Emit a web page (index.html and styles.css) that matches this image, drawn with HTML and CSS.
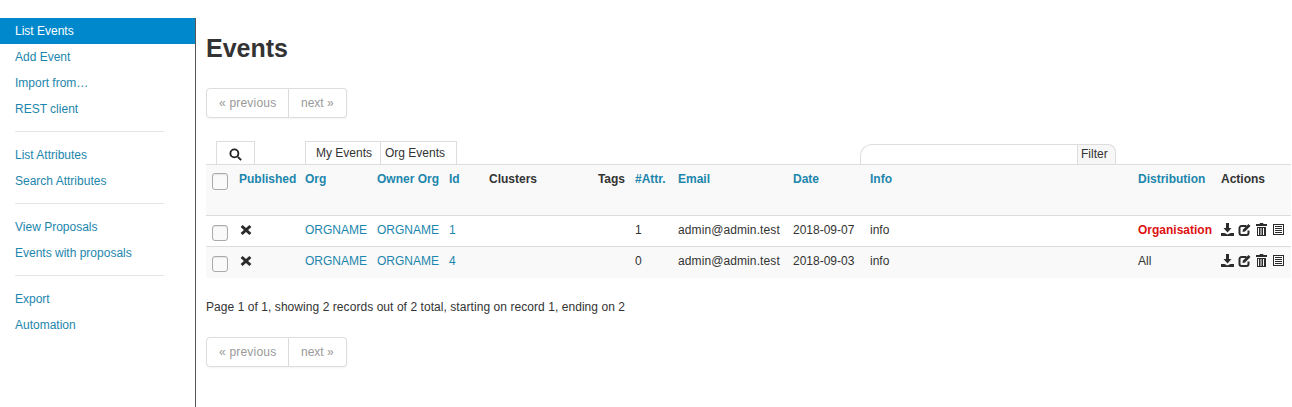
FILE: index.html
```html
<!DOCTYPE html>
<html lang="en">
<head>
<meta charset="utf-8">
<title>Events</title>
<link rel="stylesheet" href="styles.css">
</head>
<body>
<svg class="defs" width="0" height="0" aria-hidden="true">
  <symbol id="i-x" viewBox="0 0 12 12"><path d="M2.600.9 6 4.100 9.400.9l2 2L8.100 6l3.300 3.100-2 2L6 7.900l-3.400 3.200-2-2L3.900 6 .6 2.900z"/></symbol>
  <symbol id="i-dl" viewBox="0 0 13 13"><path d="M5 0h3v5h2.500L6.500 9.500 2.500 5H5zM0 10h3.500l3 1.500 3-1.500H13v3H0z"/></symbol>
  <symbol id="i-edit" viewBox="0 0 13 13"><path d="M8.500 3H3.500A2 2 0 0 0 1.500 5v5a2 2 0 0 0 2 2h5a2 2 0 0 0 2-2V7.500" fill="none" stroke="currentColor" stroke-width="2"/><path d="M4.500 9 5 6.500 10.500 1l2 2L7 8.500z"/></symbol>
  <symbol id="i-trash" viewBox="0 0 13 13"><path d="M5 0h3l.5 1H12v2H1V1h3.500zM2 4h9v9H2zM3 5v7h1V5zm2.500 0v7h1V5zM8 5v7h1V5z" fill-rule="evenodd"/></symbol>
  <symbol id="i-list" viewBox="0 0 13 13"><path d="M1 1h11v11H1zM2 2v9h9V2z" fill-rule="evenodd"/><path d="M3 3h7v1H3zM3 5h7v1H3zM3 7h7v1H3zM3 9h7v1H3z"/></symbol>
  <symbol id="i-search" viewBox="0 0 14 14"><circle cx="5.800" cy="5.800" r="4.300" fill="none" stroke="currentColor" stroke-width="2"/><path d="M8.800 10.300 10.300 8.800 13.800 12.300 12.300 13.800z"/></symbol>
</svg>
<div class="page">
  <nav class="side">
    <ul class="menu">
      <li class="item active"><a>List Events</a></li>
      <li class="item"><a>Add Event</a></li>
      <li class="item"><a>Import from…</a></li>
      <li class="item"><a>REST client</a></li>
      <li class="divider"></li>
      <li class="item"><a>List Attributes</a></li>
      <li class="item"><a>Search Attributes</a></li>
      <li class="divider"></li>
      <li class="item"><a>View Proposals</a></li>
      <li class="item"><a>Events with proposals</a></li>
      <li class="divider"></li>
      <li class="item"><a>Export</a></li>
      <li class="item"><a>Automation</a></li>
    </ul>
  </nav>
  <main class="main">
    <h2 class="title">Events</h2>
    <div class="pager"><span class="pg pg-prev">« previous</span><span class="pg pg-next">next »</span></div>
    <div class="tabbar">
      <div class="tab tab-search"><svg class="ic ic-search"><use href="#i-search"/></svg></div>
      <div class="tabgroup">
        <span class="tab tab-my">My Events</span><span class="tab tab-org">Org Events</span>
      </div>
      <div class="filter"><span class="filter-input"></span><span class="filter-label">Filter</span></div>
    </div>
    <table class="events">
      <colgroup>
        <col class="c-check"><col class="c-pub"><col class="c-org"><col class="c-owner"><col class="c-id"><col class="c-clusters"><col class="c-tags"><col class="c-attr"><col class="c-email"><col class="c-date"><col class="c-info"><col class="c-dist"><col class="c-actions">
      </colgroup>
      <thead>
        <tr>
          <th><span class="cb cb-head"></span></th>
          <th class="lnk">Published</th><th class="lnk">Org</th><th class="lnk">Owner Org</th><th class="lnk">Id</th>
          <th>Clusters</th><th class="right">Tags</th>
          <th class="lnk">#Attr.</th><th class="lnk">Email</th><th class="lnk">Date</th><th class="lnk">Info</th><th class="lnk">Distribution</th><th>Actions</th>
        </tr>
      </thead>
      <tbody>
        <tr>
          <td><span class="cb"></span></td>
          <td><svg class="ic ic-x"><use href="#i-x"/></svg></td>
          <td class="lnk">ORGNAME</td><td class="lnk">ORGNAME</td><td class="lnk">1</td><td></td><td></td>
          <td>1</td><td class="mail">admin@admin.test</td><td>2018-09-07</td><td>info</td>
          <td class="dist-org">Organisation</td>
          <td class="acts"><div class="act-row"><svg class="ic"><use href="#i-dl"/></svg><svg class="ic"><use href="#i-edit"/></svg><svg class="ic"><use href="#i-trash"/></svg><svg class="ic"><use href="#i-list"/></svg></div></td>
        </tr>
        <tr class="alt">
          <td><span class="cb"></span></td>
          <td><svg class="ic ic-x"><use href="#i-x"/></svg></td>
          <td class="lnk">ORGNAME</td><td class="lnk">ORGNAME</td><td class="lnk">4</td><td></td><td></td>
          <td>0</td><td class="mail">admin@admin.test</td><td>2018-09-03</td><td>info</td>
          <td>All</td>
          <td class="acts"><div class="act-row"><svg class="ic"><use href="#i-dl"/></svg><svg class="ic"><use href="#i-edit"/></svg><svg class="ic"><use href="#i-trash"/></svg><svg class="ic"><use href="#i-list"/></svg></div></td>
        </tr>
      </tbody>
    </table>
    <p class="summary">Page 1 of 1, showing 2 records out of 2 total, starting on record 1, ending on 2</p>
    <div class="pager"><span class="pg pg-prev">« previous</span><span class="pg pg-next">next »</span></div>
  </main>
</div>
</body>
</html>
```

FILE: styles.css
```css
* { box-sizing: border-box; }
html, body { margin: 0; height: 100%; }
body { font: 12px/18px "Liberation Sans", Arial, sans-serif; color: #333; background: #fff; overflow: hidden; }
.defs { position: absolute; }
.page { display: flex; height: 407px; padding-top: 18px; }

.side { width: 196px; flex: none; border-right: 1px solid #555; height: 389px; }
.menu { list-style: none; margin: 0; padding: 0; }
.item a { display: block; height: 26px; padding: 4px 15px; color: #1c86ad; }
.item.active a { background: #0088cc; color: #fff; }
.divider { height: 1px; margin: 9px 31px 10px 15px; background: #e5e5e5; }

.main { flex: 1; min-width: 0; padding-left: 10px; }
.title { margin: 0; font-size: 25px; line-height: 30px; font-weight: bold; color: #333; padding-top: 15px; height: 70px; }
.pager { display: flex; height: 30px; color: #999; }
.pg { display: block; height: 30px; padding: 5px 12px; border: 1px solid #ddd; background: #fff; line-height: 18px; white-space: nowrap; box-shadow: 0 1px 2px rgba(0,0,0,.05); }
.pg-prev { width: 83px; border-radius: 4px 0 0 4px; letter-spacing: .2px; }
.pg-next { width: 58px; border-left: 0; border-radius: 0 4px 4px 0; }

.tabbar { display: flex; align-items: flex-end; height: 23px; margin-top: 23px; }
.tab { display: block; height: 23px; background: #fff; border: 1px solid #ddd; border-bottom: 0; line-height: 23px; color: #333; }
.tab-search { width: 39px; margin-left: 10px; display: flex; justify-content: center; align-items: center; padding-top: 2px; }
.tabgroup { display: flex; margin-left: 50px; }
.tab-my { width: 76px; padding-left: 10px; }
.tab-org { width: 76px; padding-left: 4px; border-left: 0; }
.filter { display: flex; margin-left: 403px; height: 20px; }
.filter-input { width: 217px; border: 1px solid #ddd; border-bottom: 0; border-right: 0; border-radius: 12px 0 0 0; background: #fff; }
.filter-label { width: 39px; padding-left: 3px; border: 1px solid #ddd; border-bottom: 0; border-radius: 0 8px 0 0; background: #f7f7f7; line-height: 19px; }

.events { border-collapse: collapse; table-layout: fixed; width: 1085px; }
.c-check { width: 28px; }
.c-pub { width: 66px; }
.c-org { width: 72px; }
.c-owner { width: 72px; }
.c-id { width: 40px; }
.c-clusters { width: 104px; }
.c-tags { width: 42px; }
.c-attr { width: 43px; }
.c-email { width: 115px; }
.c-date { width: 77px; }
.c-info { width: 268px; }
.c-dist { width: 83px; }
.c-actions { width: 75px; }

.events th, .events td { text-align: left; padding: 5px; vertical-align: top; line-height: 18px; white-space: nowrap; }
.events thead tr { height: 51px; background: #f9f9f9; }
.events th { border-top: 1px solid #ddd; font-weight: bold; }
.events tbody tr { height: 31px; }
.events tbody td { border-top: 1px solid #ddd; }
.events th.right { text-align: right; }
.events .lnk { color: #1c86ad; }
.events .mail { letter-spacing: .1px; }
.alt { background: #f9f9f9; }
.dist-org { color: #dd1111; font-weight: bold; }
.events th:first-child, .events td:first-child { padding-left: 6px; padding-right: 0; }

.cb { display: block; width: 16px; height: 16px; border: 1px solid #aaa; border-radius: 3px; background: #fafafa; margin-top: 4px; box-shadow: inset 0 1px 1px rgba(0,0,0,.08); }
.cb-head { height: 17px; margin-top: 3px; }
.ic { display: block; flex: none; width: 13px; height: 13px; fill: currentColor; color: #2b2b2b; }
.ic-x { width: 12px; height: 12px; margin: 3px 0 0 1px; }
.ic-search { width: 13px; height: 13px; color: #222; }
.act-row { display: flex; gap: 4px; margin-top: 2px; }

.summary { margin: 0; padding-top: 20px; height: 59px; letter-spacing: .06px; }
```
